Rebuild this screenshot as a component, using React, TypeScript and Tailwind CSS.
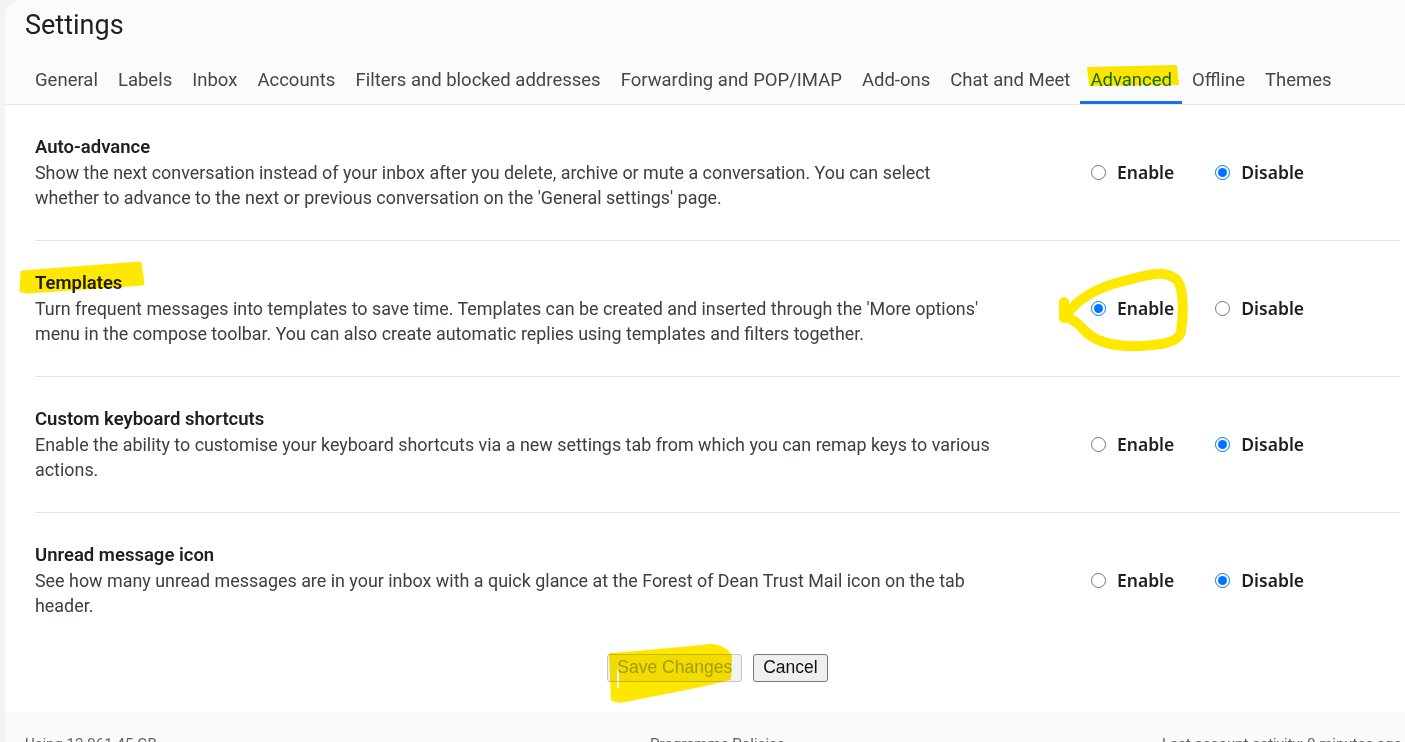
import React from "react";

const tabs = [
  "General",
  "Labels",
  "Inbox",
  "Accounts",
  "Filters and blocked addresses",
  "Forwarding and POP/IMAP",
  "Add-ons",
  "Chat and Meet",
  "Advanced",
  "Offline",
  "Themes",
];

type Row = { title: string; desc: string; enabled: boolean; name: string };

const rows: Row[] = [
  {
    name: "auto",
    title: "Auto-advance",
    desc: "Show the next conversation instead of your inbox after you delete, archive or mute a conversation. You can select whether to advance to the next or previous conversation on the 'General settings' page.",
    enabled: false,
  },
  {
    name: "templates",
    title: "Templates",
    desc: "Turn frequent messages into templates to save time. Templates can be created and inserted through the 'More options' menu in the compose toolbar. You can also create automatic replies using templates and filters together.",
    enabled: true,
  },
  {
    name: "shortcuts",
    title: "Custom keyboard shortcuts",
    desc: "Enable the ability to customise your keyboard shortcuts via a new settings tab from which you can remap keys to various actions.",
    enabled: false,
  },
  {
    name: "unread",
    title: "Unread message icon",
    desc: "See how many unread messages are in your inbox with a quick glance at the Forest of Dean Trust Mail icon on the tab header.",
    enabled: false,
  },
];

function Radio({ name, checked, label }: { name: string; checked: boolean; label: string }) {
  return (
    <label className="flex items-center gap-[11px]">
      <input
        type="radio"
        name={name}
        defaultChecked={checked}
        className="w-[15px] h-[15px] m-0 accent-[#0075ff]"
      />
      <span className="font-['Noto_Sans',sans-serif] font-semibold text-[17.5px] text-[#1f1f1f] leading-[25px]">
        {label}
      </span>
    </label>
  );
}

export default function App() {
  return (
    <div className="relative w-[1405px] h-[742px] overflow-hidden bg-[#f3f3f3] font-['Roboto',sans-serif]">
      <div className="ml-[5px] h-full bg-white rounded-tl-2xl flex flex-col">
        {/* header */}
        <div className="bg-[#fbfbfb] rounded-tl-2xl border-b border-[#e6e8eb]">
          <div className="h-[50px] flex items-center pl-[20px]">
            <h1 className="text-[27px] leading-none text-[#1f1f1f] font-normal">Settings</h1>
          </div>
          <div className="flex pl-[20px] h-[54px]">
            {tabs.map((t) => {
              const active = t === "Advanced";
              return (
                <div
                  key={t}
                  className={
                    active
                      ? "h-full px-[10px] pt-[11px] flex items-center border-b-[3px] border-[#1a73e8] text-[#1a73e8] text-[18.5px] whitespace-nowrap"
                      : "h-full px-[10px] pt-[11px] flex items-center border-b-[3px] border-transparent text-[#444746] text-[18.5px] whitespace-nowrap"
                  }
                >
                  {t}
                </div>
              );
            })}
          </div>
        </div>

        {/* rows */}
        <div className="pl-[30px] pr-[5px]">
          {rows.map((r, i) => (
            <div
              key={r.name}
              className={
                i < rows.length - 1
                  ? "flex py-[30px] border-b border-[#e0e0e0]"
                  : "flex py-[30px]"
              }
            >
              <div className="w-[1056px] flex-none">
                <div className="text-[18.5px] leading-[25px] font-semibold text-[#1f1f1f]">{r.title}</div>
                <div className="w-[958px] text-[17.9px] leading-[25px] text-[#3c4043]">{r.desc}</div>
              </div>
              <div className="mt-[25px] h-[25px] flex items-center gap-[41px]">
                <Radio name={r.name} checked={r.enabled} label="Enable" />
                <Radio name={r.name} checked={!r.enabled} label="Disable" />
              </div>
            </div>
          ))}
        </div>

        {/* buttons */}
        <div className="pl-[30px] pr-[5px] mt-[6px] flex justify-center gap-[11px] font-['Liberation_Sans',Arial,sans-serif]">
          <button
            disabled
            className="h-[28px] px-[9px] text-[17.5px] leading-none rounded-[3px] border border-[#c8c8c8] bg-[#f2f2f2] text-[#a8a8a8]"
          >
            Save Changes
          </button>
          <button className="h-[28px] px-[9px] text-[17.5px] leading-none rounded-[3px] border border-[#767676] bg-[#efefef] text-[#111]">
            Cancel
          </button>
        </div>

        {/* footer */}
        <div className="mt-[30px] flex-1 bg-[#fafafa] pt-[22px] flex text-[15px] leading-[20px] text-[#5f6368] whitespace-nowrap">
          <div className="pl-[20px] w-[645px]">Using 12.961.45 GB</div>
          <div className="w-[512px]">Programme Policies</div>
          <div>Last account activity: 0 minutes ago</div>
        </div>
      </div>

      {/* yellow marker annotations */}
      <svg
        className="absolute inset-0 pointer-events-none mix-blend-multiply"
        width="1405"
        height="742"
        viewBox="0 0 1405 742"
      >
        <g fill="#ffe800" stroke="#ffe800" strokeLinejoin="round" strokeLinecap="round">
          <path d="M1088,68 L1176,66 L1178,84 L1090,85 Z" strokeWidth="2" />
          <path d="M22,272 L140,263 L143,284 L27,292 L21,291 Z" strokeWidth="3" />
          <path
            d="M610,654 C640,652 680,648 710,645 C720,645 728,650 731,656 L730,679 C700,687 660,694 620,702 L612,700 Z M616,667 L620,669 L620,688 L616,690 Z"
            fillRule="evenodd"
            strokeWidth="2"
          />
        </g>
        <g fill="none" stroke="#ffe800" strokeWidth="10" strokeLinecap="round" strokeLinejoin="round">
          <path d="M1066,316 C1076,300 1096,288 1120,282 C1145,276 1163,268 1177,280 C1185,290 1183,318 1181,332 C1178,343 1160,345 1140,346 C1115,347 1096,343 1084,330 C1077,322 1071,318 1064,316" />
          <path d="M1064,302 L1064,318" />
        </g>
      </svg>
    </div>
  );
}
